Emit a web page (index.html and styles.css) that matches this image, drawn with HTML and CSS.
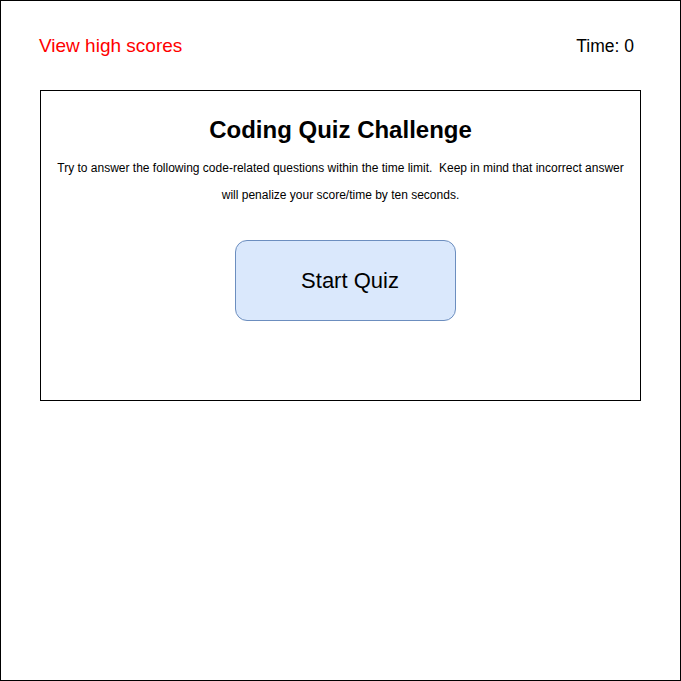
FILE: index.html
```html
<!DOCTYPE html>
<html lang="en">
<head>
<meta charset="utf-8">
<title>Coding Quiz</title>
<link rel="stylesheet" href="styles.css">
</head>
<body>
<div class="frame">
  <header class="top">
    <a class="scores" href="#">View high scores</a>
    <span class="timer">Time: 0</span>
  </header>
  <main class="card">
    <h1 class="title">Coding Quiz Challenge</h1>
    <p class="intro">Try to answer the following code-related questions within the time limit.&nbsp; Keep in mind that incorrect answer will penalize your score/time by ten seconds.</p>
    <div class="actions">
      <button class="start" type="button">Start Quiz</button>
    </div>
  </main>
</div>
</body>
</html>
```

FILE: styles.css
```css
* { box-sizing: border-box; }
html, body { margin: 0; padding: 0; background: #fff; }
body { font-family: "Liberation Sans", Arial, Helvetica, sans-serif; color: #000; }

.frame {
  width: 681px;
  height: 681px;
  border: 1px solid #000;
  padding: 34px 0 0 0;
}

.top {
  display: flex;
  justify-content: space-between;
  align-items: baseline;
  padding: 0 46px 0 38px;
  height: 22px;
  line-height: 22px;
}

.scores {
  color: #ff0000;
  text-decoration: none;
  font-size: 19px;
}

.timer {
  font-size: 17.5px;
}

.card {
  margin: 33px 0 0 39px;
  width: 601px;
  height: 311px;
  border: 1px solid #000;
  padding: 25px 10px 0 10px;
  text-align: center;
}

.title {
  margin: 0;
  font-size: 24px;
  line-height: 28px;
  font-weight: bold;
}

.intro {
  margin: 11px 0 0 0;
  font-size: 12px;
  line-height: 27px;
}

.actions {
  display: flex;
  margin-top: 31px;
  padding-left: 184px;
}

.start {
  width: 221px;
  height: 81px;
  background: #dae8fc;
  border: 1px solid #6c8ebf;
  border-radius: 12px;
  font-family: "Liberation Sans", Arial, Helvetica, sans-serif;
  font-size: 22px;
  color: #000;
  padding: 0 0 0 9px;
  cursor: pointer;
}
```
